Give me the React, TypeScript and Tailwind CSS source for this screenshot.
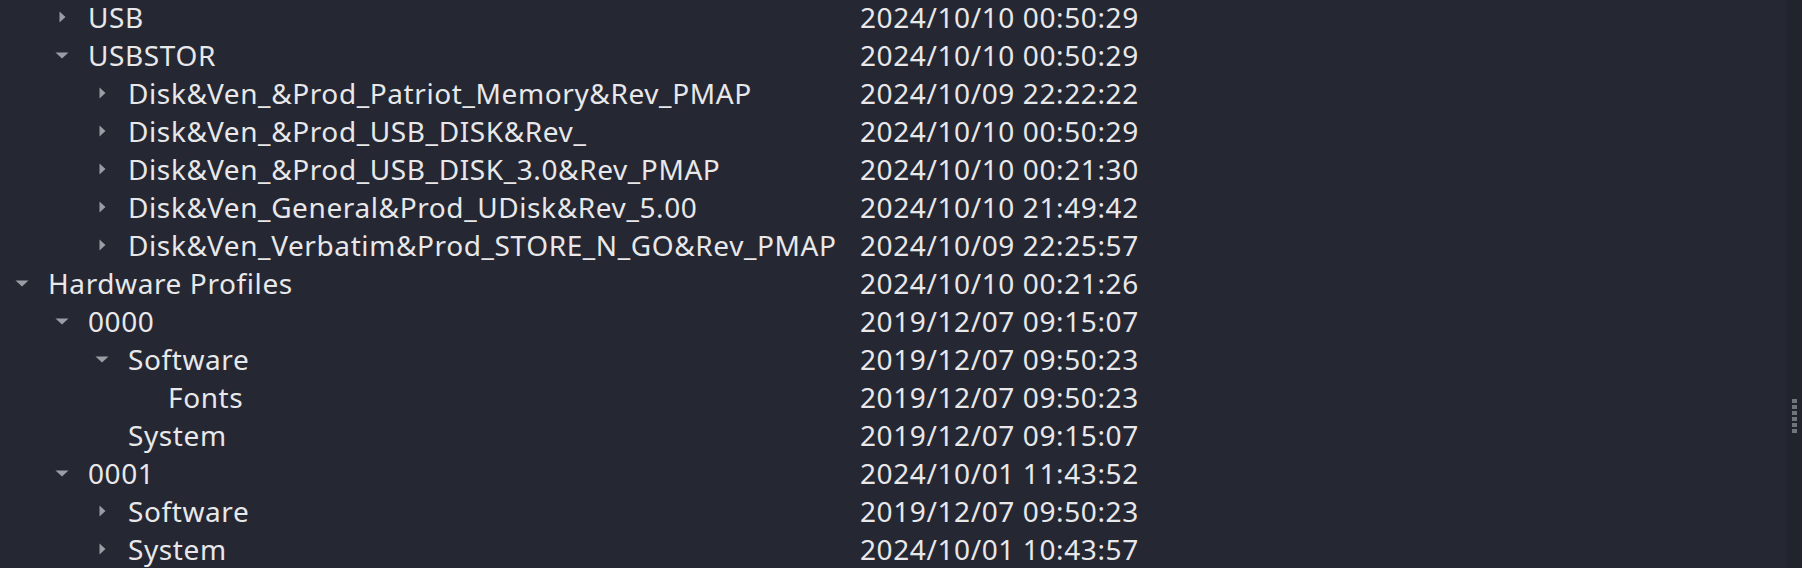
import React from "react";

type Row = { name: string; level: number; date: string; arrow?: "right" | "down" };

const rows: Row[] = [
  { name: "USB", level: 1, date: "2024/10/10 00:50:29", arrow: "right" },
  { name: "USBSTOR", level: 1, date: "2024/10/10 00:50:29", arrow: "down" },
  { name: "Disk&Ven_&Prod_Patriot_Memory&Rev_PMAP", level: 2, date: "2024/10/09 22:22:22", arrow: "right" },
  { name: "Disk&Ven_&Prod_USB_DISK&Rev_", level: 2, date: "2024/10/10 00:50:29", arrow: "right" },
  { name: "Disk&Ven_&Prod_USB_DISK_3.0&Rev_PMAP", level: 2, date: "2024/10/10 00:21:30", arrow: "right" },
  { name: "Disk&Ven_General&Prod_UDisk&Rev_5.00", level: 2, date: "2024/10/10 21:49:42", arrow: "right" },
  { name: "Disk&Ven_Verbatim&Prod_STORE_N_GO&Rev_PMAP", level: 2, date: "2024/10/09 22:25:57", arrow: "right" },
  { name: "Hardware Profiles", level: 0, date: "2024/10/10 00:21:26", arrow: "down" },
  { name: "0000", level: 1, date: "2019/12/07 09:15:07", arrow: "down" },
  { name: "Software", level: 2, date: "2019/12/07 09:50:23", arrow: "down" },
  { name: "Fonts", level: 3, date: "2019/12/07 09:50:23" },
  { name: "System", level: 2, date: "2019/12/07 09:15:07" },
  { name: "0001", level: 1, date: "2024/10/01 11:43:52", arrow: "down" },
  { name: "Software", level: 2, date: "2019/12/07 09:50:23", arrow: "right" },
  { name: "System", level: 2, date: "2024/10/01 10:43:57", arrow: "right" },
];

const indent = ["pl-[14px]", "pl-[54px]", "pl-[94px]", "pl-[134px]"];

function Arrow({ dir }: { dir?: "right" | "down" }) {
  return (
    <span className="flex h-full w-4 shrink-0 items-center justify-center">
      {dir === "right" && (
        <svg width="7" height="12" viewBox="0 0 7 12"><path d="M0.5 0.5 L6.5 6 L0.5 11.5 Z" fill="#9b9da5" /></svg>
      )}
      {dir === "down" && (
        <svg width="14" height="7" viewBox="0 0 14 7"><path d="M0.5 0.5 L13.5 0.5 L7 6.5 Z" fill="#9b9da5" /></svg>
      )}
    </span>
  );
}

export default function App() {
  return (
    <div className="flex h-[568px] w-[1802px] overflow-hidden bg-[#252733] text-[28px] tracking-[0.6px] text-[#e8e8ea]" style={{ fontFamily: '"Noto Sans", "Open Sans", sans-serif' }}>
      <div className="-mt-[2px] flex-1">
        {rows.map((r, i) => (
          <div key={i} className="flex h-[38px] items-center leading-none">
            <div className={`flex h-full w-[860px] shrink-0 items-center ${indent[r.level]}`}>
              <Arrow dir={r.arrow} />
              <span className="ml-[18px] whitespace-nowrap">{r.name}</span>
            </div>
            <span className="whitespace-nowrap">{r.date}</span>
          </div>
        ))}
      </div>
      <div className="flex w-[15px] flex-col items-center bg-[#21232d] pt-[399px]">
        <div className="flex flex-col gap-[2px]">
          {[0, 1, 2, 3, 4, 5].map((d) => (
            <span key={d} className="h-[4px] w-[5px] bg-[#72747c]" />
          ))}
        </div>
      </div>
    </div>
  );
}
